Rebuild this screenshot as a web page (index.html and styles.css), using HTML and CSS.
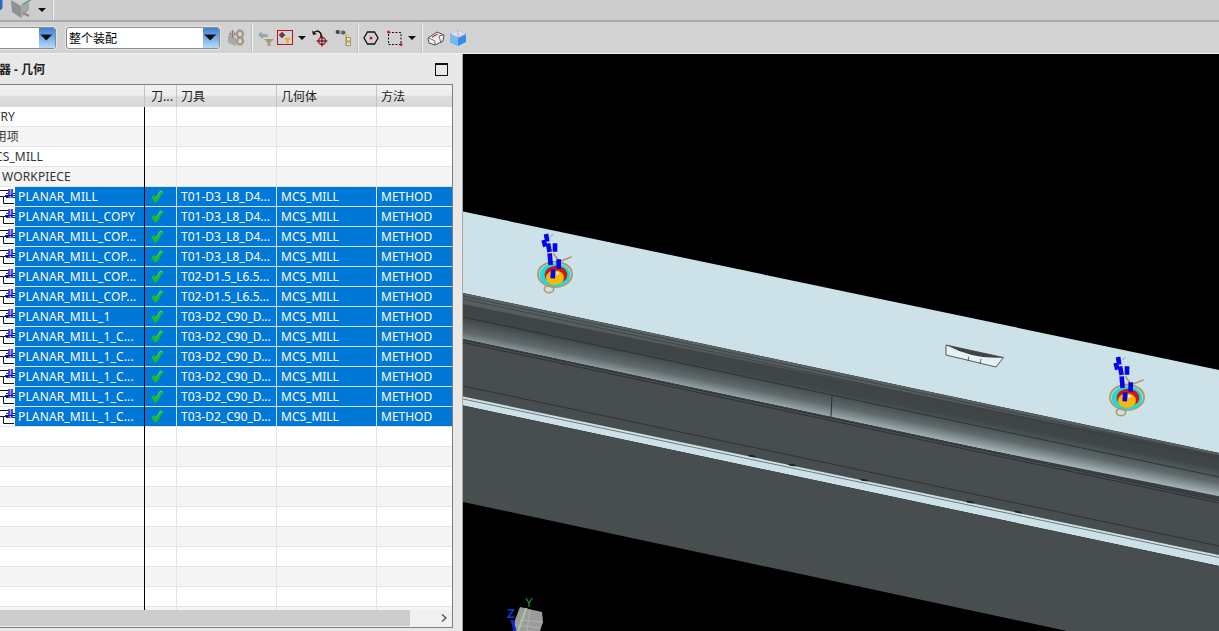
FILE: index.html
```html
<!DOCTYPE html>
<html lang="zh">
<head>
<meta charset="utf-8">
<title>工序导航器 - 几何</title>
<link rel="stylesheet" href="styles.css">
</head>
<body>
<svg class="defs" aria-hidden="true">
  <symbol id="op" viewBox="0 0 15 20">
    <path d="M0 3.500H8.500V9.500H3.500M0 9.500H3.500V16.500H14" fill="none" stroke="#111" stroke-width="1"/>
    <rect x="8" y="2" width="5" height="9" fill="#4c4cc8"/>
    <rect x="10" y="2" width="1" height="9" fill="#a8a8f0"/>
    <path d="M5 8.500H15M6 6.500H8M13 6.500H15M6 10.500H8M13 10.500H15" stroke="#1010d8" stroke-width="1" fill="none"/>
  </symbol>
  <symbol id="chk" viewBox="0 0 12 13">
    <path d="M.3 7L3 5L5 7.500L9.500 .8L12 2.300L5.500 12.600H3.600Z" fill="#14c02c"/>
    <path d="M5 7.500L9.500 .8L12 2.300" fill="none" stroke="#8ce89a" stroke-width=".6"/>
  </symbol>
  <symbol id="drop" viewBox="0 0 9 6">
    <path d="M0 1H8L4 5Z" fill="#111"/>
  </symbol>
</svg>

<header class="bar bar-top">
  <svg class="top-blue" viewBox="0 0 4 12"><path d="M0 0H2.500V6Q2.500 10 0 10Z" fill="#2a66c8"/></svg>
  <svg class="top-cube" viewBox="0 0 22 19">
    <path d="M0 0L10 6V18L1 12Z" fill="#8a8f8f"/>
    <path d="M10 6L18 0V10L10 18Z" fill="#a3a7a7"/>
    <path d="M11 5L21 -1" stroke="#6f9a70" stroke-width="1.500"/>
    <path d="M12 13L18 16" stroke="#a87878" stroke-width="2"/>
  </svg>
  <svg class="top-drop"><use href="#drop"/></svg>
  <span class="vsep top-sep"></span>
</header>

<div class="bar bar-tools">
  <div class="combo combo-a"><span class="combo-text"></span><span class="combo-btn"><svg class="combo-tri"><use href="#drop"/></svg></span></div>
  <div class="combo combo-b"><span class="combo-text">整个装配</span><span class="combo-btn"><svg class="combo-tri"><use href="#drop"/></svg></span></div>

  <svg class="ic w16 ml8" viewBox="0 0 16 18">
    <path d="M0 6L8 9V17L0 14Z" fill="#a9a9a9"/>
    <circle cx="4.500" cy="5" r="2.500" fill="none" stroke="#b08a8a"/>
    <path d="M4.500 1V9M1 5H8" stroke="#8b7b7b"/>
    <ellipse cx="12" cy="5" rx="3" ry="3.500" fill="none" stroke="#a0957c" stroke-width="2"/>
    <ellipse cx="12" cy="12" rx="3" ry="3.500" fill="none" stroke="#a0957c" stroke-width="2"/>
  </svg>
  <span class="vsep ml7"></span>
  <svg class="ic w18 ml4" viewBox="0 0 18 18">
    <path d="M1 6L5 2V5H9Q11 5 11 8H6V10Z" fill="#9aa3a3"/>
    <path d="M7 10H17L13.500 13.500V17H10.500V13.500Z" fill="#a89c78"/>
  </svg>
  <svg class="ic w16 ml2" viewBox="0 0 16 18">
    <rect x=".5" y="1.500" width="15" height="14" fill="none" stroke="#c01020"/>
    <circle cx="5" cy="6" r="2" fill="none" stroke="#b01818"/>
    <path d="M5 3V9M2 6H8" stroke="#222"/>
    <path d="M7 9H14L11.500 11.500V14.500H9.500V11.500Z" fill="#eeaa10"/>
  </svg>
  <svg class="drop9 ml5"><use href="#drop"/></svg>
  <svg class="ic w16 ml5" viewBox="0 0 16 18">
    <path d="M1 4.500Q5 0 8.500 4Q10 6 8.500 8" fill="none" stroke="#111" stroke-width="1.500"/>
    <path d="M0 1.500L1 6L5 5Z" fill="#222"/>
    <circle cx="10" cy="12" r="3.500" fill="none" stroke="#e01020" stroke-width="1.500"/>
    <path d="M10 6.500V17.500M4.500 12H15.500" stroke="#111"/>
  </svg>
  <svg class="ic w16 ml7" viewBox="0 0 16 18">
    <ellipse cx="3" cy="3" rx="2.500" ry="2" fill="#3c4650"/>
    <ellipse cx="8" cy="3.500" rx="2.500" ry="2" fill="#56606a"/>
    <path d="M4 2H7V4H4Z" fill="#8a96a2"/>
    <circle cx="11" cy="6" r="1.300" fill="#d8c040"/>
    <path d="M11 7V17" stroke="#888"/>
    <rect x="11.500" y="8.500" width="4" height="3.500" fill="#efe4b8" stroke="#a89858"/>
    <rect x="11.500" y="13" width="4" height="3.500" fill="#d8e4ee" stroke="#a89858"/>
  </svg>
  <span class="vsep ml6"></span>
  <svg class="ic w16 ml4" viewBox="0 0 16 18">
    <path d="M4.500 3H11.500L15 9L11.500 15H4.500L1 9Z" fill="none" stroke="#111" stroke-width="1.300"/>
    <circle cx="8" cy="9" r="1.500" fill="#d01818"/>
  </svg>
  <svg class="ic w18 ml7" viewBox="0 0 18 18">
    <rect x="2.500" y="3.500" width="12.500" height="12" fill="none" stroke="#111" stroke-dasharray="2 1.500"/>
    <circle cx="2.500" cy="3" r="1.500" fill="#d01818"/>
    <circle cx="15" cy="15.500" r="1.500" fill="#d01818"/>
  </svg>
  <svg class="drop9 ml4"><use href="#drop"/></svg>
  <span class="vsep ml4"></span>
  <svg class="ic w18 ml4" viewBox="0 0 18 18">
    <path d="M1 9L10 3L17 6L16 12L8 16L2 14Z" fill="#f2f2f2" stroke="#4a4f58" stroke-width="1"/>
    <path d="M4 8L10 4.500L12.500 6L6.500 10Z" fill="#e8e8ee"/>
    <path d="M5 8.200L10.500 5" stroke="#c8303c" stroke-width="1.200"/>
    <path d="M12 7L14 14M12 7L16 6M2 9L8 12V16" fill="none" stroke="#4a4f58" stroke-width=".8"/>
  </svg>
  <svg class="ic w18 ml4" viewBox="0 0 18 18">
    <path d="M1 5L9 1L17 5V13L9 17L1 13Z" fill="#2f8fe8"/>
    <path d="M1 5L9 9V17L1 13Z" fill="#72bcf4"/>
    <path d="M1 5L9 1L17 5L9 9Z" fill="#cfe4f8"/>
    <path d="M9 9V1M1 5L9 9L17 5" fill="none" stroke="#d88a94" stroke-width=".8"/>
  </svg>
</div>

<main class="work">
  <section class="panel">
    <div class="panel-head">
      <div class="panel-title"><span>工序导航器 - 几何</span></div>
      <span class="maxbox"></span>
    </div>
    <div class="frame">
      <div class="thead">
        <div class="th c1"></div>
        <div class="th c2">刀...</div>
        <div class="th c3">刀具</div>
        <div class="th c3">几何体</div>
        <div class="th c4">方法</div>
      </div>
      <div class="tbody">
        <div class="row"><div class="td c1"><div class="clip clip-a"><span>GEOMETRY</span></div></div><div class="td c2"></div><div class="td c3"></div><div class="td c3"></div><div class="td c4"></div></div>
        <div class="row"><div class="td c1"><div class="clip clip-b"><span>未用项</span></div></div><div class="td c2"></div><div class="td c3"></div><div class="td c3"></div><div class="td c4"></div></div>
        <div class="row"><div class="td c1"><div class="clip clip-c"><span>MCS_MILL</span></div></div><div class="td c2"></div><div class="td c3"></div><div class="td c3"></div><div class="td c4"></div></div>
        <div class="row"><div class="td c1"><span class="wp">WORKPIECE</span></div><div class="td c2"></div><div class="td c3"></div><div class="td c3"></div><div class="td c4"></div></div>

        <div class="row sel"><div class="td c1"><svg class="op"><use href="#op"/></svg><span class="nm">PLANAR_MILL</span></div><div class="td c2"><svg class="chk"><use href="#chk"/></svg></div><div class="td c3">T01-D3_L8_D4...</div><div class="td c3">MCS_MILL</div><div class="td c4">METHOD</div></div>
        <div class="row sel"><div class="td c1"><svg class="op"><use href="#op"/></svg><span class="nm">PLANAR_MILL_COPY</span></div><div class="td c2"><svg class="chk"><use href="#chk"/></svg></div><div class="td c3">T01-D3_L8_D4...</div><div class="td c3">MCS_MILL</div><div class="td c4">METHOD</div></div>
        <div class="row sel"><div class="td c1"><svg class="op"><use href="#op"/></svg><span class="nm">PLANAR_MILL_COP...</span></div><div class="td c2"><svg class="chk"><use href="#chk"/></svg></div><div class="td c3">T01-D3_L8_D4...</div><div class="td c3">MCS_MILL</div><div class="td c4">METHOD</div></div>
        <div class="row sel"><div class="td c1"><svg class="op"><use href="#op"/></svg><span class="nm">PLANAR_MILL_COP...</span></div><div class="td c2"><svg class="chk"><use href="#chk"/></svg></div><div class="td c3">T01-D3_L8_D4...</div><div class="td c3">MCS_MILL</div><div class="td c4">METHOD</div></div>
        <div class="row sel"><div class="td c1"><svg class="op"><use href="#op"/></svg><span class="nm">PLANAR_MILL_COP...</span></div><div class="td c2"><svg class="chk"><use href="#chk"/></svg></div><div class="td c3">T02-D1.5_L6.5...</div><div class="td c3">MCS_MILL</div><div class="td c4">METHOD</div></div>
        <div class="row sel"><div class="td c1"><svg class="op"><use href="#op"/></svg><span class="nm">PLANAR_MILL_COP...</span></div><div class="td c2"><svg class="chk"><use href="#chk"/></svg></div><div class="td c3">T02-D1.5_L6.5...</div><div class="td c3">MCS_MILL</div><div class="td c4">METHOD</div></div>
        <div class="row sel"><div class="td c1"><svg class="op"><use href="#op"/></svg><span class="nm">PLANAR_MILL_1</span></div><div class="td c2"><svg class="chk"><use href="#chk"/></svg></div><div class="td c3">T03-D2_C90_D...</div><div class="td c3">MCS_MILL</div><div class="td c4">METHOD</div></div>
        <div class="row sel"><div class="td c1"><svg class="op"><use href="#op"/></svg><span class="nm">PLANAR_MILL_1_C...</span></div><div class="td c2"><svg class="chk"><use href="#chk"/></svg></div><div class="td c3">T03-D2_C90_D...</div><div class="td c3">MCS_MILL</div><div class="td c4">METHOD</div></div>
        <div class="row sel"><div class="td c1"><svg class="op"><use href="#op"/></svg><span class="nm">PLANAR_MILL_1_C...</span></div><div class="td c2"><svg class="chk"><use href="#chk"/></svg></div><div class="td c3">T03-D2_C90_D...</div><div class="td c3">MCS_MILL</div><div class="td c4">METHOD</div></div>
        <div class="row sel"><div class="td c1"><svg class="op"><use href="#op"/></svg><span class="nm">PLANAR_MILL_1_C...</span></div><div class="td c2"><svg class="chk"><use href="#chk"/></svg></div><div class="td c3">T03-D2_C90_D...</div><div class="td c3">MCS_MILL</div><div class="td c4">METHOD</div></div>
        <div class="row sel"><div class="td c1"><svg class="op"><use href="#op"/></svg><span class="nm">PLANAR_MILL_1_C...</span></div><div class="td c2"><svg class="chk"><use href="#chk"/></svg></div><div class="td c3">T03-D2_C90_D...</div><div class="td c3">MCS_MILL</div><div class="td c4">METHOD</div></div>
        <div class="row sel"><div class="td c1"><svg class="op"><use href="#op"/></svg><span class="nm">PLANAR_MILL_1_C...</span></div><div class="td c2"><svg class="chk"><use href="#chk"/></svg></div><div class="td c3">T03-D2_C90_D...</div><div class="td c3">MCS_MILL</div><div class="td c4">METHOD</div></div>

        <div class="row"><div class="td c1"></div><div class="td c2"></div><div class="td c3"></div><div class="td c3"></div><div class="td c4"></div></div>
        <div class="row"><div class="td c1"></div><div class="td c2"></div><div class="td c3"></div><div class="td c3"></div><div class="td c4"></div></div>
        <div class="row"><div class="td c1"></div><div class="td c2"></div><div class="td c3"></div><div class="td c3"></div><div class="td c4"></div></div>
        <div class="row"><div class="td c1"></div><div class="td c2"></div><div class="td c3"></div><div class="td c3"></div><div class="td c4"></div></div>
        <div class="row"><div class="td c1"></div><div class="td c2"></div><div class="td c3"></div><div class="td c3"></div><div class="td c4"></div></div>
        <div class="row"><div class="td c1"></div><div class="td c2"></div><div class="td c3"></div><div class="td c3"></div><div class="td c4"></div></div>
        <div class="row"><div class="td c1"></div><div class="td c2"></div><div class="td c3"></div><div class="td c3"></div><div class="td c4"></div></div>
        <div class="row"><div class="td c1"></div><div class="td c2"></div><div class="td c3"></div><div class="td c3"></div><div class="td c4"></div></div>
        <div class="row"><div class="td c1"></div><div class="td c2"></div><div class="td c3"></div><div class="td c3"></div><div class="td c4"></div></div>
        <div class="row"><div class="td c1"></div><div class="td c2"></div><div class="td c3"></div><div class="td c3"></div><div class="td c4"></div></div>
      </div>
      <div class="hscroll">
        <span class="thumb"></span>
        <svg class="sarrow" viewBox="0 0 6 8"><path d="M1 .5L5 4L1 7.500" fill="none" stroke="#555" stroke-width="1.500"/></svg>
      </div>
    </div>
  </section>

  <svg class="view" viewBox="463 54 756 577" preserveAspectRatio="none">
    <defs>
      <linearGradient id="band" gradientUnits="userSpaceOnUse" x1="800" y1="364" x2="790.600" y2="411">
        <stop offset="0" stop-color="#5a6264"/>
        <stop offset=".14" stop-color="#565d5f"/>
        <stop offset=".17" stop-color="#3f4547"/>
        <stop offset=".42" stop-color="#3f4648"/>
        <stop offset=".72" stop-color="#5f696b"/>
        <stop offset=".98" stop-color="#a2b2b6"/>
        <stop offset="1" stop-color="#3a4042"/>
      </linearGradient>
      <g id="marker">
        <g transform="translate(500 210) scale(.3333)">
          <path d="M160 130L178 155L215 140" fill="none" stroke="#b09a68" stroke-width="5"/>
          <ellipse cx="165" cy="193" rx="51" ry="38" fill="#cde2e8" stroke="#b09a68" stroke-width="6"/>
          <ellipse cx="165" cy="195" rx="46" ry="35" fill="#18dce0"/>
          <ellipse cx="168" cy="194" rx="34" ry="27" fill="#cc1a10"/>
          <ellipse cx="165" cy="203" rx="27" ry="22" fill="#f8b808"/>
          <ellipse cx="147" cy="237" rx="14" ry="11" fill="none" stroke="#b09a68" stroke-width="5"/>
          <path d="M138 72L142 95M131 90L136 110M144 100L149 126M149 130L152 165M165 100L165 125M176 148L176 176M160 178L158 205" fill="none" stroke="#0404ee" stroke-width="14"/>
          <path d="M150 82L160 72" stroke="#7f90ee" stroke-width="3"/>
          <rect x="168" y="186" width="8" height="8" fill="#e8e8d8"/>
        </g>
      </g>
    </defs>
    <rect x="463" y="54" width="756" height="577" fill="#000"/>
    <polygon points="463,211.500 1219,370 1219,453 463,293" fill="#cde2e8"/>
    <polygon points="463,293 1219,453 1219,499 463,339" fill="url(#band)"/>
    <path d="M463 296L1219 456M463 299L1219 459" stroke="#383d3f" stroke-width=".8"/>
    <path d="M463 317L1219 477" stroke="#2e3335" stroke-width="1"/>
    <polygon points="463,339 1219,499 1219,555 463,397" fill="#484e50"/>
    <path d="M463 340L1219 500.500M463 342.500L1219 503" stroke="#2c3032" stroke-width="1"/>
    <path d="M463 386L1219 546" stroke="#2e3335" stroke-width="1"/>
    <polygon points="463,396.500 1219,555 1219,566 463,405.500" fill="#cde2e8"/>
    <path d="M463 399L1219 557.500" stroke="#6e787a" stroke-width="1"/>
    <polygon points="463,405.500 1219,566 1219,631 1067,631 463,502" fill="#484e50"/>
    <path d="M832 395.500L831 417" stroke="#2a2e30" stroke-width="1"/>
    <ellipse cx="752" cy="456" rx="4" ry="1" fill="#222" transform="rotate(12 752 456)"/>
    <ellipse cx="792" cy="465" rx="4" ry="1" fill="#222" transform="rotate(12 792 465)"/>
    <ellipse cx="864" cy="480" rx="4" ry="1" fill="#222" transform="rotate(12 864 480)"/>
    <ellipse cx="970" cy="502" rx="4" ry="1" fill="#222" transform="rotate(12 970 502)"/>
    <ellipse cx="1018" cy="512" rx="4" ry="1" fill="#222" transform="rotate(12 1018 512)"/>

    <polygon points="946,345 1003.500,357.500 996,367 946,355" fill="#e6f1f4" stroke="#333" stroke-width=".8"/>
    <path d="M946 345L1003.500 357.500Q975 360 946 345Z" fill="#3e4446"/>
    <path d="M969 356.500L968 361M981 359L980 364" stroke="#333" stroke-width=".7"/>

    <use href="#marker"/>
    <use href="#marker" transform="translate(572 123)"/>

    <polygon points="515,620 520,607 542,612 543,622 540,631 513,631" fill="#9c9c9c"/>
    <path d="M520 620L543 622M530 610L527 631M516 625L540 628" stroke="#b2b2b2" stroke-width="1"/>
    <path d="M526.500 608L518 631" stroke="#a8c8a8" stroke-width="2"/>
    <path d="M512 620L515 631" stroke="#0a2bd0" stroke-width="3"/>
    <text x="529" y="607" class="ax-y">Y</text>
    <text x="511" y="618" class="ax-z">Z</text>
  </svg>
</main>
</body>
</html>
```
FILE: styles.css
```css
* { box-sizing: border-box; }
html, body { margin: 0; height: 100%; }
body {
  width: 1219px;
  height: 631px;
  overflow: hidden;
  display: flex;
  flex-direction: column;
  font-family: "Noto Sans", "Noto Sans CJK SC", sans-serif;
  font-size: 12px;
  color: #333;
  background: #d0d0d0;
}
.defs { position: absolute; width: 0; height: 0; }

.bar { display: flex; flex: none; overflow: hidden; }
.bar-top {
  height: 22px;
  background: #cdcdcd;
  border-bottom: 2px solid #a9a9a9;
  position: relative;
}
.bar-tools {
  height: 32px;
  align-items: center;
  background: #d2d2d2;
  border-bottom: 1px solid #efefef;
}
.top-blue { width: 4px; height: 12px; flex: none; }
.top-cube { width: 22px; height: 19px; margin-left: 7px; flex: none; opacity: .95; }
.top-drop { width: 9px; height: 6px; margin: 7px 0 0 5px; flex: none; }
.top-sep { margin-left: 5px; height: 22px; }

.vsep {
  flex: none;
  width: 2px;
  height: 29px;
  background: linear-gradient(90deg, #c0c0c0 50%, #f2f2f2 50%);
}
.combo {
  flex: none;
  display: flex;
  height: 22px;
  background: #fff;
  border: 1px solid #8b8b8b;
  border-radius: 3px;
  box-shadow: 0 0 0 1px #e4e4e4;
}
.combo-a { width: 59px; margin-left: -3px; }
.combo-b { width: 154px; margin-left: 10px; }
.combo-text {
  flex: 1;
  padding-left: 2px;
  line-height: 19px;
  color: #000;
  font-family: "Noto Sans CJK SC", sans-serif;
  font-size: 12px;
}
.combo-btn {
  flex: none;
  width: 16px;
  display: flex;
  align-items: center;
  justify-content: center;
  background: linear-gradient(180deg, #3f7fd2 0%, #7fb2ea 55%, #b9d8f6 100%);
  border-radius: 0 2px 2px 0;
}
.combo-tri { width: 14px; height: 9px; }

.ic { flex: none; height: 18px; }
.w16 { width: 16px; }
.w18 { width: 18px; }
.drop9 { flex: none; width: 9px; height: 6px; }
.ml2 { margin-left: 2px; }
.ml4 { margin-left: 4px; }
.ml5 { margin-left: 5px; }
.ml6 { margin-left: 6px; }
.ml7 { margin-left: 7px; }
.ml8 { margin-left: 8px; }

.work { flex: 1; display: flex; min-height: 0; }
.panel {
  flex: none;
  width: 463px;
  display: flex;
  flex-direction: column;
  background: #e8e8e8;
  border-right: 1px solid #a8a8a8;
  padding-right: 9px;
}
.panel-head {
  flex: none;
  height: 30px;
  display: flex;
  align-items: center;
  justify-content: space-between;
  padding-right: 5px;
}
.panel-title {
  width: 45px;
  display: flex;
  justify-content: flex-end;
  overflow: hidden;
  white-space: nowrap;
  font-weight: 700;
  color: #222;
}
.panel-title span { flex: none; }
.maxbox {
  width: 13px;
  height: 13px;
  margin-top: 1px;
  border: 1px solid #111;
  border-top-width: 2px;
}
.frame {
  flex: none;
  height: 544px;
  display: flex;
  flex-direction: column;
  border-top: 1px solid #808080;
  border-right: 1px solid #808080;
  border-bottom: 1px solid #808080;
  background: #f0f0f0;
}
.thead {
  flex: none;
  height: 22px;
  display: flex;
  background: linear-gradient(180deg, #f2f2f2 0%, #eeeeee 45%, #dcdcdc 55%, #dadada 100%);
}
.th {
  height: 22px;
  line-height: 22px;
  padding-left: 5px;
  border-right: 1px solid #c4c4c4;
  font-family: "Noto Sans CJK SC", sans-serif;
  color: #222;
}
.c1 { width: 145px; }
.c2 { width: 32px; }
.c3 { width: 100px; }
.c4 { width: 75px; border-right: 0 !important; }
.th.c2 { padding-left: 6px; }
.th.c3, .th.c4 { padding-left: 4px; }

.tbody {
  flex: none;
  height: 503px;
  overflow: hidden;
  background: #fff;
  position: relative;
}
.tbody::after {
  content: "";
  position: absolute;
  left: 144px;
  top: 0;
  bottom: 0;
  width: 1px;
  background: #000;
}
.row {
  height: 20px;
  display: flex;
  border-bottom: 1px solid #e5e5e5;
  background: #fff;
}
.row:nth-child(even) { background: #f5f5f5; }
.td {
  height: 19px;
  line-height: 19px;
  padding-left: 4px;
  border-right: 1px solid #e5e5e5;
  white-space: nowrap;
  overflow: hidden;
}
.td.c1 {
  display: flex;
  padding-left: 0;
  letter-spacing: .15px;
}
.td.c2 { padding-left: 6px; }
.row.sel { background: #fff; border-bottom-color: #d9e4ee; }
.sel .td { color: #fff; background: #0078d7; border-right-color: #d9e4ee; }
.sel .td.c1 { background: linear-gradient(90deg, #fff 15px, #0078d7 15px); }
.op { flex: none; width: 15px; height: 20px; }
.nm { padding-left: 3px; }
.chk { display: block; width: 12px; height: 13px; margin-top: 3px; }
.clip { display: flex; justify-content: flex-end; overflow: hidden; }
.clip span { flex: none; }
.clip-a { width: 15px; }
.clip-b { width: 19px; }
.clip-c { width: 43px; }
.wp { padding-left: 2px; }

.hscroll {
  flex: none;
  height: 16px;
  margin-bottom: 2px;
  display: flex;
  align-items: center;
  justify-content: space-between;
  background: #f0f0f0;
  padding-right: 5px;
}
.thumb { width: 410px; height: 16px; background: #cdcdcd; }
.sarrow { width: 6px; height: 8px; }

.view { flex: 1; width: 756px; height: 577px; display: block; }
.ax-y { fill: #1f9a2f; font-size: 12px; font-family: "Liberation Sans", sans-serif; text-anchor: middle; }
.ax-z { fill: #0a3ae0; font-size: 13px; font-weight: 700; font-family: "Liberation Sans", sans-serif; text-anchor: middle; }
```
